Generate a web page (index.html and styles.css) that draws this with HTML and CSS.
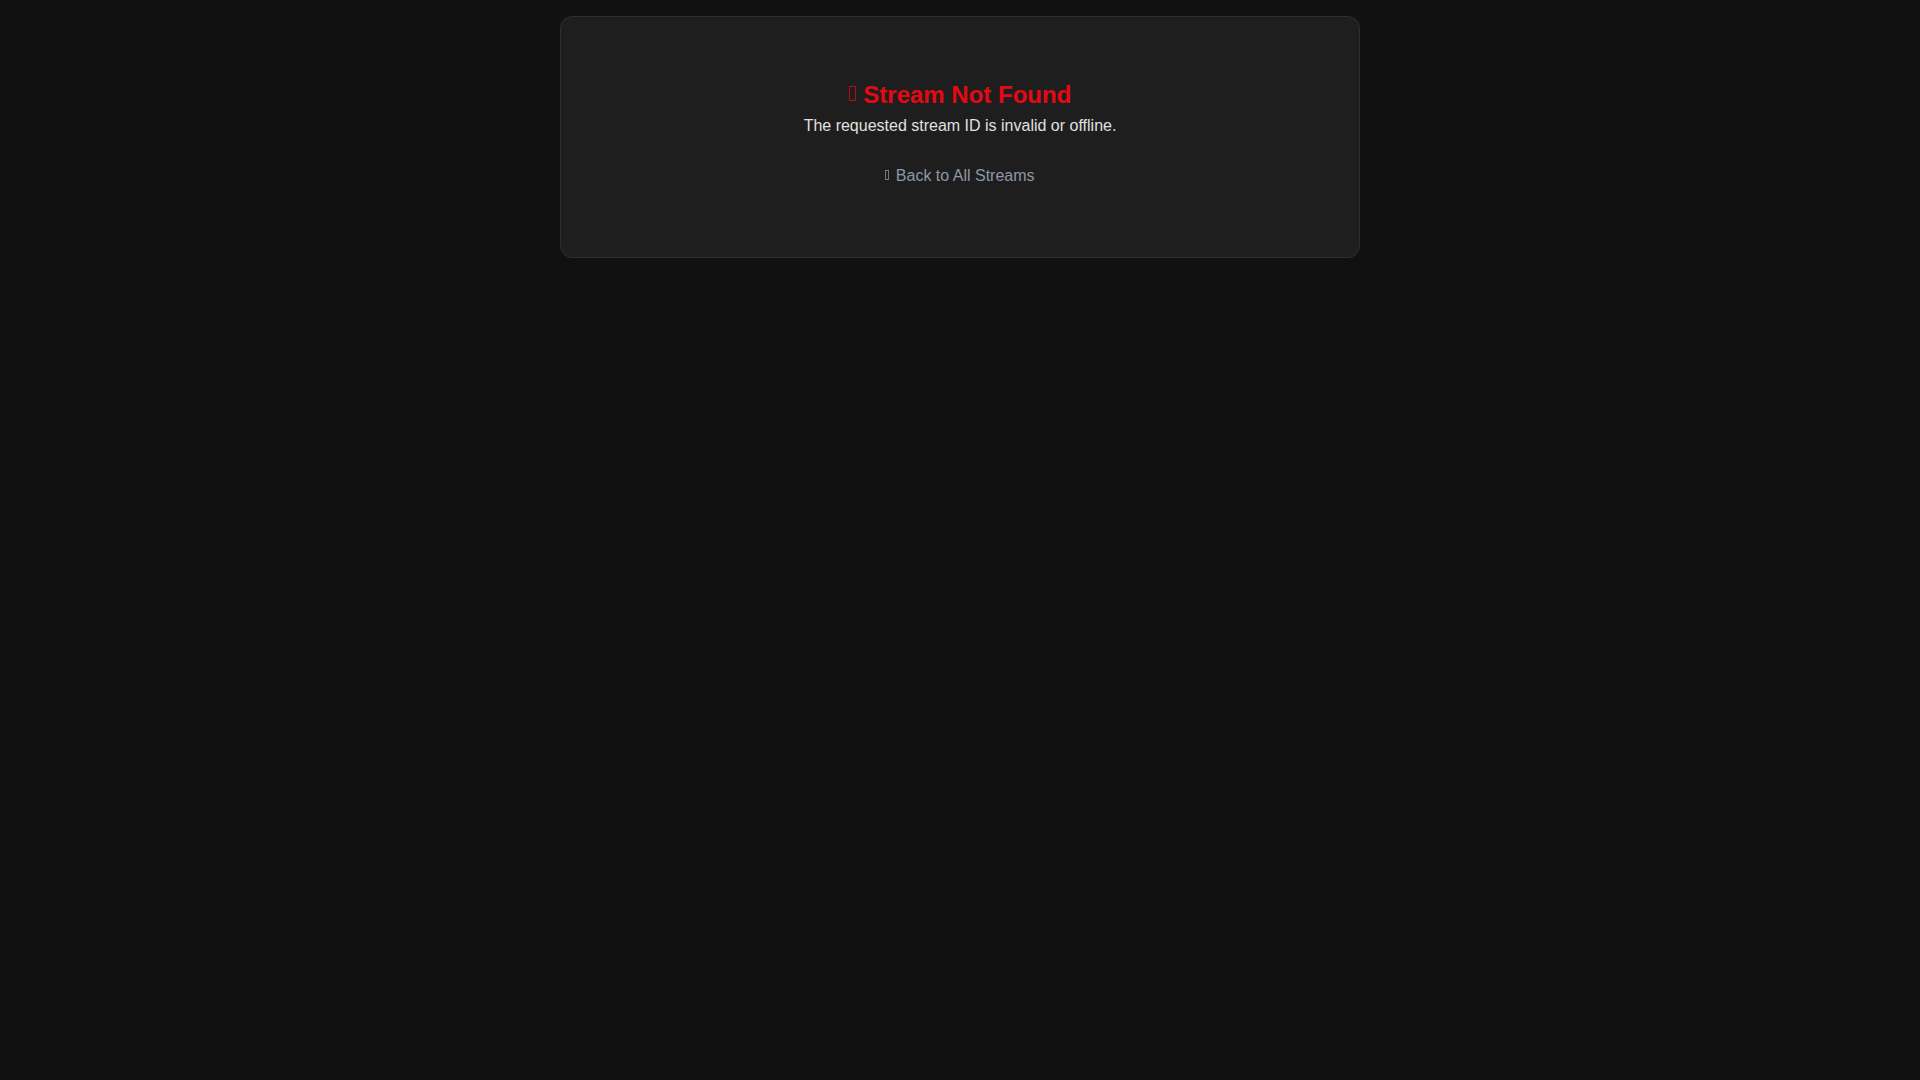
FILE: index.html
```html
<!DOCTYPE html>
<html lang="en">
<head>
<meta charset="utf-8">
<title>Stream Not Found</title>
<link rel="stylesheet" href="styles.css">
</head>
<body>
<main class="container">
  <section class="card">
    <h2 class="title"><span class="icon icon-lg" aria-hidden="true"></span> Stream Not Found</h2>
    <p class="message">The requested stream ID is invalid or offline.</p>
    <a class="back" href="#"><span class="icon icon-sm" aria-hidden="true"></span> Back to All Streams</a>
  </section>
</main>
</body>
</html>
```
FILE: styles.css
```css
html, body {
  margin: 0;
  padding: 0;
  background: #111111;
  font-family: "Liberation Sans", Arial, sans-serif;
  color: #e0e0e0;
}

.container {
  max-width: 800px;
  margin: 16px auto 0;
}

.card {
  background: #1e1e1e;
  border: 1px solid #2e2e2e;
  border-radius: 12px;
  padding: 64px 40px 72px;
  text-align: center;
}

.title {
  margin: 0 0 8px;
  font-size: 24px;
  font-weight: bold;
  line-height: normal;
  color: #e50914;
}

.message {
  margin: 0;
  font-size: 16px;
  line-height: normal;
  color: #e0e0e0;
}

.back {
  display: block;
  margin-top: 32px;
  font-size: 16px;
  line-height: normal;
  color: #8d97a7;
  text-decoration: none;
}

.icon {
  display: inline-block;
  box-sizing: border-box;
  border: 1px solid currentColor;
  opacity: 0.75;
}

.icon-lg {
  width: 7px;
  height: 15px;
  margin: 0 1px 2px 0;
}

.icon-sm {
  width: 4px;
  height: 10px;
  margin: 0 2px 1px 0;
}
```
